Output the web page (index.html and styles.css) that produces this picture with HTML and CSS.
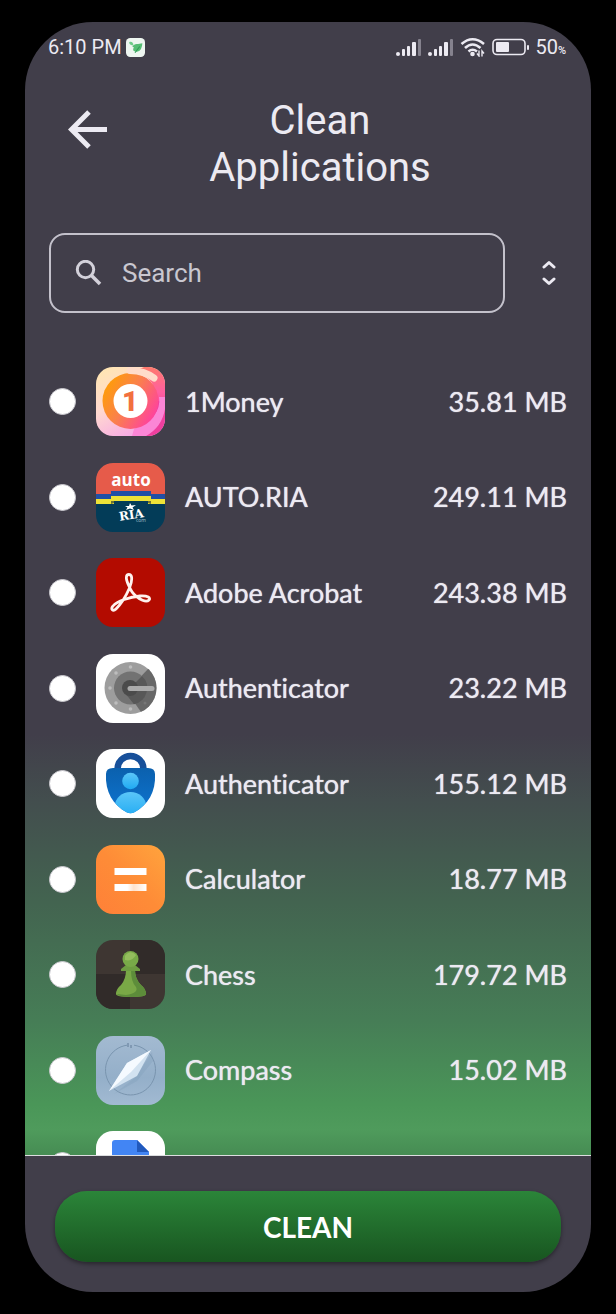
FILE: index.html
```html
<!DOCTYPE html>
<html lang="en">
<head>
<meta charset="utf-8">
<meta name="viewport" content="width=device-width, initial-scale=1">
<title>Clean Applications</title>
<link rel="stylesheet" href="styles.css">
</head>
<body>
<div class="phone">
  <div class="status">
    <span class="status-time">6:10 PM</span>
    <svg class="status-app" viewBox="0 0 18 18" aria-hidden="true">
      <rect width="18" height="18" rx="4" fill="#eef6f1"/>
      <path d="M6 8C8 5 12 6 15.500 5C15 10 13.500 13 10 13C7 13 6 11 7.500 9Z" fill="#55bd74"/>
      <path d="M8.500 14L13 8" stroke="#2f9a55"/>
      <path d="M3 4C5 3 7 4 7 7C5 7 3 6 3 4Z" fill="#6fcb89"/>
    </svg>
    <span class="status-icons">
      <svg width="26" height="18" viewBox="0 0 26 18" aria-hidden="true">
        <g fill="#eceaf2"><rect y="14" width="4" height="4" rx="2"/><rect x="6" y="11" width="3" height="7" rx="1"/><rect x="11" y="8" width="3" height="10" rx="1"/><rect x="16" y="4" width="4" height="14" rx="1"/></g>
        <rect x="22" y="1" width="3" height="17" rx="1" fill="#85828e"/>
      </svg>
      <svg width="26" height="18" viewBox="0 0 26 18" aria-hidden="true">
        <g fill="#eceaf2"><rect y="14" width="4" height="4" rx="2"/><rect x="6" y="11" width="3" height="7" rx="1"/><rect x="11" y="8" width="3" height="10" rx="1"/><rect x="16" y="4" width="4" height="14" rx="1"/></g>
        <rect x="22" y="1" width="3" height="17" rx="1" fill="#85828e"/>
      </svg>
      <svg width="26" height="20" viewBox="0 0 26 20" aria-hidden="true">
        <g fill="none" stroke="#eceaf2" stroke-width="2.600"><path d="M1.500 7Q12.500-2.500 24 7"/><path d="M5 11Q12.500 4 20.500 11"/><path d="M8.500 14.500Q12.500 11 17 14.500"/></g>
        <circle cx="12.500" cy="17" r="2.300" fill="#eceaf2"/>
        <path d="M19 13.500V19L17 16.500M22 19.500V14L24 16.500" fill="none" stroke="#eceaf2" stroke-width="1.400"/>
      </svg>
      <svg class="battery" width="37" height="18" viewBox="0 0 37 18" aria-hidden="true">
        <rect x="1" y="1.500" width="32" height="15" rx="4" fill="none" stroke="#eceaf2" stroke-width="1.600"/>
        <rect x="4" y="4" width="13" height="10" rx="1" fill="#eceaf2"/>
        <rect x="35" y="7" width="2" height="5" rx="1" fill="#eceaf2"/>
      </svg>
      <span class="charge">50<small>%</small></span>
    </span>
  </div>

  <header class="header">
    <button class="icon-button back" type="button" aria-label="Back">
      <svg width="40" height="40" viewBox="0 0 40 40" aria-hidden="true"><path d="M39 20.500H4M21 3L3.500 20.500L21 38" fill="none" stroke="#eceaf2" stroke-width="5"/></svg>
    </button>
    <h1 class="title">Clean<br>Applications</h1>
  </header>

  <div class="tools">
    <label class="search">
      <svg width="27" height="27" viewBox="0 0 27 27" aria-hidden="true"><circle cx="10.500" cy="9.500" r="8.200" fill="none" stroke="#d3d1da" stroke-width="3"/><path d="M16.500 15.500L25 24" stroke="#d3d1da" stroke-width="3.600"/></svg>
      <input class="search-input" type="search" placeholder="Search" aria-label="Search">
    </label>
    <button class="icon-button sort" type="button" aria-label="Sort">
      <svg width="14" height="26" viewBox="0 0 14 26" aria-hidden="true"><path d="M2 7L7 2.500L12 7M2 19L7 23.500L12 19" fill="none" stroke="#eceaf2" stroke-width="3" stroke-linecap="round" stroke-linejoin="round"/></svg>
    </button>
  </div>

  <main class="apps">
    <ul class="list">
      <li><label class="row">
        <input class="pick" type="checkbox">
        <svg class="app" viewBox="0 0 69 69" aria-hidden="true">
          <defs>
            <linearGradient id="m-bg" x1="0" y1="0" x2=".6" y2="1"><stop offset="0" stop-color="#ffe7ae"/><stop offset=".5" stop-color="#ffd9d0"/><stop offset="1" stop-color="#f6a6e6"/></linearGradient>
            <linearGradient id="m-side" x1="0" y1="0" x2="0" y2="1"><stop offset="0" stop-color="#ff7a6d"/><stop offset=".5" stop-color="#ff5fa0"/><stop offset="1" stop-color="#ee3a9c"/></linearGradient>
            <linearGradient id="m-ring" x1="0" y1=".2" x2="1" y2=".8"><stop offset="0" stop-color="#ffa000"/><stop offset=".45" stop-color="#fa814b"/><stop offset="1" stop-color="#ff3aa8"/></linearGradient>
          </defs>
          <rect width="69" height="69" fill="url(#m-bg)"/>
          <path d="M34 6Q48 4 56 16L62 34L69 50V0H48Z" fill="url(#m-side)"/>
          <path d="M62 34L69 34V69H50Z" fill="#ee3f9e"/>
          <path d="M63 30Q66 50 38 62L36 69H50Q66 60 69 42V30Z" fill="#fb86d6"/>
          <circle cx="34.500" cy="34" r="28" fill="url(#m-ring)"/>
          <path d="M34 3.500Q49 4 58 11" fill="none" stroke="#ffdcca" stroke-width="7" stroke-linecap="round"/>
          <circle cx="34.500" cy="34" r="17" fill="#fff"/>
          <text x="34" y="44" text-anchor="middle" class="one">1</text>
        </svg>
        <span class="name">1Money</span><span class="size">35.81 MB</span>
      </label></li>

      <li><label class="row">
        <input class="pick" type="checkbox">
        <svg class="app" viewBox="0 0 69 69" aria-hidden="true">
          <rect width="69" height="69" fill="#033c58"/>
          <rect width="69" height="32" fill="#e65b4a"/>
          <path d="M0 31H15V28H55V31H69V36H0Z" fill="#214fa5"/>
          <path d="M0 36H15V33H55V36H69V41H52V38H18V41H0Z" fill="#eee237"/>
          <path d="M15 38H18V40L15 41ZM52 38H55V41L52 40Z" fill="#6d7233"/>
          <text x="35" y="23" text-anchor="middle" class="auto">auto</text>
          <g transform="rotate(-9 35 50)"><text x="35" y="56" text-anchor="middle" class="ria">RIA</text></g>
          <path d="M34 40L35.500 42.500L40 42L36.500 44.500L38 47L34 45.500L30 47L31.500 44.500L29 43L33 43Z" fill="#fff"/>
          <text x="45" y="59" text-anchor="middle" class="com">com</text>
        </svg>
        <span class="name">AUTO.RIA</span><span class="size">249.11 MB</span>
      </label></li>

      <li><label class="row">
        <input class="pick" type="checkbox">
        <svg class="app" viewBox="0 0 69 69" aria-hidden="true">
          <rect width="69" height="69" fill="#b30b00"/>
          <path d="M33 28C29 20 30 16.500 33 16.500C37 16.500 36 24 33.500 30C30 38 24 47 20 51C17 54 14 51 17 48C21 43 34 39 44 38C52 37.500 55 40 53 42C50 45 43 41 40 38C36 35 34.500 32 33 28Z" fill="none" stroke="#fff2ee" stroke-width="2.800" stroke-linejoin="round"/>
        </svg>
        <span class="name">Adobe Acrobat</span><span class="size">243.38 MB</span>
      </label></li>

      <li><label class="row">
        <input class="pick" type="checkbox">
        <svg class="app" viewBox="0 0 69 69" aria-hidden="true">
          <clipPath id="g-dial"><circle cx="34.500" cy="34" r="26"/></clipPath>
          <rect width="69" height="69" fill="#fff"/>
          <g clip-path="url(#g-dial)">
            <rect width="69" height="69" fill="#9d9d9d"/>
            <path d="M52 15L34 34L31 38L45 58L69 69V0Z" fill="#686868"/>
            <circle cx="34.500" cy="34" r="16.500" fill="#727272"/>
            <path d="M46 22A16.500 16.500 0 0 1 38 50.200L29 39L34 34Z" fill="#585858"/>
            <circle cx="34" cy="34" r="8" fill="#4b4b4b"/>
          </g>
          <g fill="#bdbdbd"><circle cx="34.500" cy="13" r="1.800"/><circle cx="20" cy="19" r="1.800"/><circle cx="14" cy="34" r="1.800"/><circle cx="20" cy="49" r="1.800"/><circle cx="34.500" cy="55" r="1.800"/></g>
          <circle cx="49" cy="49" r="1.500" fill="#777"/>
          <path d="M34 34.500H56" stroke="#aaa" stroke-width="5" stroke-linecap="round"/>
        </svg>
        <span class="name">Authenticator</span><span class="size">23.22 MB</span>
      </label></li>

      <li><label class="row">
        <input class="pick" type="checkbox">
        <svg class="app" viewBox="0 0 69 69" aria-hidden="true">
          <defs>
            <linearGradient id="s-body" x1="0" y1="0" x2="0" y2="1"><stop offset="0" stop-color="#0b60ad"/><stop offset="1" stop-color="#0d76d4"/></linearGradient>
            <linearGradient id="s-man" x1="0" y1="0" x2="0" y2="1"><stop offset="0" stop-color="#5bc6f8"/><stop offset="1" stop-color="#1faaf3"/></linearGradient>
            <clipPath id="s-shield"><path d="M10 25Q10 19 17 19H52Q59 19 59 25C60 43 52 56 38 63.500Q34.500 65 31 63.500C17 56 9 43 10 25Z"/></clipPath>
          </defs>
          <rect width="69" height="69" fill="#fff"/>
          <path d="M21.500 23V20A13 13 0 0 1 47.500 20V23" fill="none" stroke="#17509a" stroke-width="6.500"/>
          <g clip-path="url(#s-shield)">
            <rect y="18" width="69" height="51" fill="url(#s-body)"/>
            <circle cx="34.500" cy="32" r="8.300" fill="url(#s-man)"/>
            <path d="M19 57A15.500 14 0 0 1 50 57V69H19Z" fill="url(#s-man)"/>
          </g>
        </svg>
        <span class="name">Authenticator</span><span class="size">155.12 MB</span>
      </label></li>

      <li><label class="row">
        <input class="pick" type="checkbox">
        <svg class="app" viewBox="0 0 69 69" aria-hidden="true">
          <defs>
            <linearGradient id="c-bg" x1="0" y1="1" x2="1" y2="0"><stop offset="0" stop-color="#ff8038"/><stop offset=".5" stop-color="#fe8c37"/><stop offset="1" stop-color="#ffa43d"/></linearGradient>
            <linearGradient id="c-bar"><stop offset="0" stop-color="#fff"/><stop offset=".4" stop-color="#fff"/><stop offset=".6" stop-color="#ffe2cc"/><stop offset="1" stop-color="#fff"/></linearGradient>
          </defs>
          <rect width="69" height="69" fill="url(#c-bg)"/>
          <rect x="18.500" y="23" width="32" height="7" fill="#fff"/>
          <rect x="18.500" y="39" width="32" height="7" fill="url(#c-bar)"/>
        </svg>
        <span class="name">Calculator</span><span class="size">18.77 MB</span>
      </label></li>

      <li><label class="row">
        <input class="pick" type="checkbox">
        <svg class="app" viewBox="0 0 69 69" aria-hidden="true">
          <rect width="69" height="69" fill="#3e3632"/>
          <path d="M34 0H69V34H34ZM0 34H34V69H0Z" fill="#312b29"/>
          <path d="M30 30H39Q39 39 45 45Q50 49 50 54Q50 57 35 57Q20 57 20 54Q20 49 25 45Q30 39 30 30Z" fill="#79a846"/>
          <path d="M35 57Q50 57 50 54Q50 49 45 45Q39 39 39 30H35Q35 42 40 47Q43 53 30 55L21 54Q22 57 35 57Z" fill="#5d8d3a"/>
          <path d="M30 25H39L44 29V31H25V29Z" fill="#6e9d42"/>
          <circle cx="34.500" cy="19" r="8" fill="#78a948"/>
          <path d="M29 16Q34 9 40 15Q36 22 29 20Z" fill="#94bd5d"/>
        </svg>
        <span class="name">Chess</span><span class="size">179.72 MB</span>
      </label></li>

      <li><label class="row">
        <input class="pick" type="checkbox">
        <svg class="app" viewBox="0 0 69 69" aria-hidden="true">
          <defs><linearGradient id="k-bg" x1="0" y1="0" x2="0" y2="1"><stop offset="0" stop-color="#a3bad1"/><stop offset=".6" stop-color="#94afc9"/><stop offset="1" stop-color="#a2bad2"/></linearGradient></defs>
          <rect width="69" height="69" fill="url(#k-bg)"/>
          <path d="M38 9.200A25 25 0 1 1 31 9.200" fill="none" stroke="#7994ae" stroke-width="1"/>
          <path d="M32 11V7M35 9V12" stroke="#607b96"/>
          <path d="M18 58L40 41L56 16L57 25L41 45Z" fill="#7896b4" opacity=".25"/>
          <path d="M55 14L31 27L13 55L41 40Z" fill="#d2e2f0"/>
          <path d="M55 14L31 27L13 55L35 36Z" fill="#f5faff"/>
        </svg>
        <span class="name">Compass</span><span class="size">15.02 MB</span>
      </label></li>

      <li><label class="row">
        <input class="pick" type="checkbox" aria-label="Docs">
        <svg class="app" viewBox="0 0 69 69" aria-hidden="true">
          <rect width="69" height="69" fill="#fff"/>
          <path d="M19 9H41L53 21V60H16V12Q16 9 19 9Z" fill="#4285f4"/>
          <path d="M41 9L53 21H41Z" fill="#2159bd"/>
        </svg>
      </label></li>
    </ul>
  </main>

  <footer class="footer">
    <button class="clean" type="button">CLEAN</button>
  </footer>
</div>
</body>
</html>
```

FILE: styles.css
```css
* {
  box-sizing: border-box;
}

body {
  margin: 0;
  padding: 22px 25px;
  background: #000;
  color: #eceaf2;
  font-family: Lato, "Liberation Sans", sans-serif;
}

.phone {
  display: flex;
  flex-direction: column;
  min-height: calc(100vh - 44px);
  border-radius: 68px;
  overflow: hidden;
  background: #413e4a;
}

.status {
  display: flex;
  align-items: center;
  gap: 4px;
  height: 50px;
  padding: 0 25px 0 23px;
  font: 20px/24px Roboto, sans-serif;
}

.status-app {
  width: 19px;
  height: 19px;
}

.status-icons {
  display: flex;
  align-items: center;
  gap: 6px;
  margin-left: auto;
}

.charge {
  display: flex;
  align-items: baseline;
}

.charge small {
  font-size: 11px;
  font-weight: 500;
  line-height: 12px;
}

.header {
  display: grid;
  grid-template-columns: 78px 1fr 54px;
  padding: 25px 24px 0;
}

.icon-button {
  display: flex;
  align-items: center;
  justify-content: center;
  padding: 0;
  border: 0;
  background: none;
}

.back {
  height: 64px;
}

.title {
  margin: 0;
  font: 400 40px/47px Roboto, sans-serif;
  text-align: center;
}

.tools {
  display: flex;
  align-items: center;
  gap: 26px;
  padding: 42px 24px 0;
}

.search {
  display: flex;
  flex: 1;
  align-items: center;
  gap: 20px;
  height: 80px;
  padding: 0 24px;
  border: 2px solid #c3c1cb;
  border-radius: 16px;
}

.search-input {
  flex: 1;
  min-width: 0;
  padding: 0;
  border: 0;
  outline: 0;
  background: none;
  color: #d3d1da;
  font: 26px/32px Roboto, sans-serif;
}

.search-input::placeholder {
  color: #c9c7d0;
  opacity: 1;
}

.sort {
  width: 36px;
  height: 48px;
}

.apps {
  display: flex;
  flex: 1;
  flex-direction: column;
  overflow: hidden;
  background: linear-gradient(#413e4a 50%, #434e4e 58%, #436450 70%, #467d56 84%, #4a9658 94%, #4f9b5c 97%, #468c53);
}

.list {
  display: flex;
  flex: 1;
  flex-direction: column;
  justify-content: space-between;
  margin: 0 0 -45px;
  padding: 54px 24px 0;
  list-style: none;
}

.row {
  display: flex;
  align-items: center;
  font-size: 27px;
  line-height: 32px;
  font-variant-ligatures: none;
  text-shadow: 0 0 1px currentColor;
}

.pick {
  appearance: none;
  width: 27px;
  height: 27px;
  margin: 0 20px 0 0;
  border: 1px solid #c9c8ce;
  border-radius: 50%;
  background: #fff;
}

.pick:checked {
  background: #2a8038;
}

.app {
  width: 69px;
  height: 69px;
  margin-right: 20px;
  border-radius: 17px;
  text-shadow: none;
}

.size {
  margin-left: auto;
}

.one {
  font: 900 28px Roboto, sans-serif;
  fill: #f2703f;
}

.auto {
  font: 700 17px "Open Sans", sans-serif;
  fill: #fff;
}

.ria {
  font: 700 12px "DejaVu Serif", serif;
  fill: #fff;
}

.com {
  font: 5px "Open Sans", sans-serif;
  fill: #a9c0cc;
}

.footer {
  padding: 35px 30px 30px;
  border-top: 1px solid #dcdddf;
}

.clean {
  display: block;
  width: 100%;
  height: 71px;
  border: 0;
  border-radius: 32px;
  background: linear-gradient(#2b8539, #185520);
  box-shadow: 0 2px 4px rgba(0, 0, 0, 0.4);
  color: #fff;
  font: 700 28px/32px Lato, "Liberation Sans", sans-serif;
}
```
